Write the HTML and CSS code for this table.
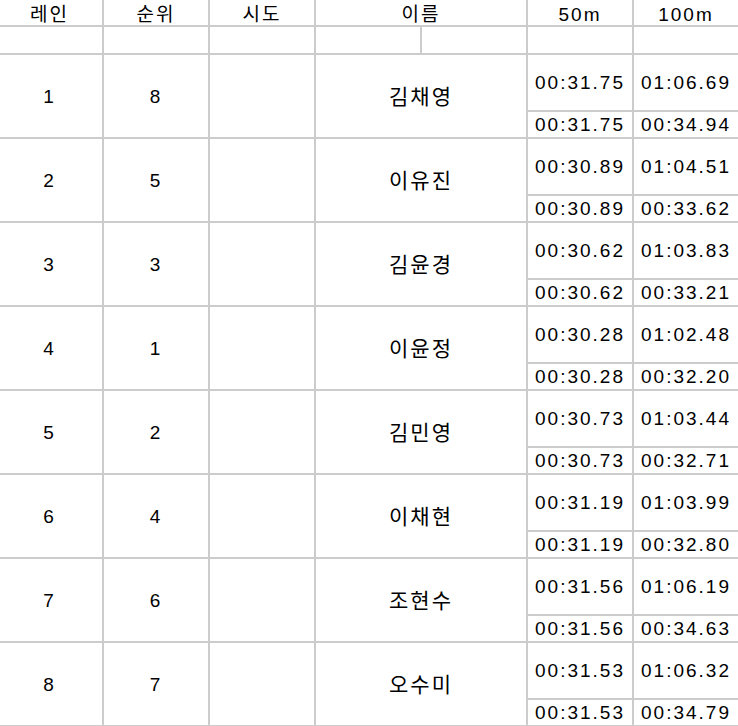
FILE: index.html
```html
<!DOCTYPE html>
<html lang="ko">
<head>
<meta charset="utf-8">
<title>경기 결과</title>
<link rel="stylesheet" href="styles.css">
</head>
<body>
<table class="results">
  <colgroup>
    <col class="c-lane">
    <col class="c-std">
    <col class="c-std">
    <col class="c-std">
    <col class="c-std">
    <col class="c-std">
    <col class="c-std">
  </colgroup>
  <thead>
    <tr class="r-head">
      <th class="first">레인</th>
      <th>순위</th>
      <th>시도</th>
      <th colspan="2">이름</th>
      <th>50m</th>
      <th>100m</th>
    </tr>
  </thead>
  <tbody>
    <tr class="r-empty">
      <td class="first"></td><td></td><td></td><td></td><td></td><td></td><td></td>
    </tr>

    <tr class="r-main">
      <td class="first" rowspan="2">1</td><td rowspan="2">8</td><td rowspan="2"></td>
      <td class="name" colspan="2" rowspan="2">김채영</td>
      <td class="time">00:31.75</td><td class="time">01:06.69</td>
    </tr>
    <tr class="r-split"><td class="time">00:31.75</td><td class="time">00:34.94</td></tr>

    <tr class="r-main">
      <td class="first" rowspan="2">2</td><td rowspan="2">5</td><td rowspan="2"></td>
      <td class="name" colspan="2" rowspan="2">이유진</td>
      <td class="time">00:30.89</td><td class="time">01:04.51</td>
    </tr>
    <tr class="r-split"><td class="time">00:30.89</td><td class="time">00:33.62</td></tr>

    <tr class="r-main">
      <td class="first" rowspan="2">3</td><td rowspan="2">3</td><td rowspan="2"></td>
      <td class="name" colspan="2" rowspan="2">김윤경</td>
      <td class="time">00:30.62</td><td class="time">01:03.83</td>
    </tr>
    <tr class="r-split"><td class="time">00:30.62</td><td class="time">00:33.21</td></tr>

    <tr class="r-main">
      <td class="first" rowspan="2">4</td><td rowspan="2">1</td><td rowspan="2"></td>
      <td class="name" colspan="2" rowspan="2">이윤정</td>
      <td class="time">00:30.28</td><td class="time">01:02.48</td>
    </tr>
    <tr class="r-split"><td class="time">00:30.28</td><td class="time">00:32.20</td></tr>

    <tr class="r-main">
      <td class="first" rowspan="2">5</td><td rowspan="2">2</td><td rowspan="2"></td>
      <td class="name" colspan="2" rowspan="2">김민영</td>
      <td class="time">00:30.73</td><td class="time">01:03.44</td>
    </tr>
    <tr class="r-split"><td class="time">00:30.73</td><td class="time">00:32.71</td></tr>

    <tr class="r-main">
      <td class="first" rowspan="2">6</td><td rowspan="2">4</td><td rowspan="2"></td>
      <td class="name" colspan="2" rowspan="2">이채현</td>
      <td class="time">00:31.19</td><td class="time">01:03.99</td>
    </tr>
    <tr class="r-split"><td class="time">00:31.19</td><td class="time">00:32.80</td></tr>

    <tr class="r-main">
      <td class="first" rowspan="2">7</td><td rowspan="2">6</td><td rowspan="2"></td>
      <td class="name" colspan="2" rowspan="2">조현수</td>
      <td class="time">00:31.56</td><td class="time">01:06.19</td>
    </tr>
    <tr class="r-split"><td class="time">00:31.56</td><td class="time">00:34.63</td></tr>

    <tr class="r-main">
      <td class="first" rowspan="2">8</td><td rowspan="2">7</td><td rowspan="2"></td>
      <td class="name" colspan="2" rowspan="2">오수미</td>
      <td class="time">00:31.53</td><td class="time">01:06.32</td>
    </tr>
    <tr class="r-split"><td class="time">00:31.53</td><td class="time">00:34.79</td></tr>
  </tbody>
</table>
</body>
</html>
```

FILE: styles.css
```css
html, body {
  margin: 0;
  padding: 0;
  background: #ffffff;
  overflow: hidden;
}

.results {
  border-collapse: collapse;
  table-layout: fixed;
  width: 739px;
  font-family: "Liberation Sans", "Noto Sans CJK KR", Arial, sans-serif;
  font-size: 19px;
  line-height: 21px;
  letter-spacing: 2px;
  color: #000000;
}

.c-lane { width: 103px; }
.c-std { width: 106px; }

.results th,
.results td {
  border: 2px solid #cccccc;
  padding: 0;
  text-align: center;
  vertical-align: middle;
  font-weight: normal;
  white-space: nowrap;
  overflow: hidden;
}

.results th {
  border-top: none;
  padding-top: 4px;
  height: 21px;
  box-sizing: content-box;
}

.results .first {
  border-left: none;
  padding-right: 3px;
}

.r-head { height: 26px; }
.r-empty { height: 28px; }
.r-main { height: 57px; }
.r-split { height: 27px; }

.results .name {
  font-size: 21px;
  letter-spacing: 2px;
}

.time {
  letter-spacing: 2px;
}
```
